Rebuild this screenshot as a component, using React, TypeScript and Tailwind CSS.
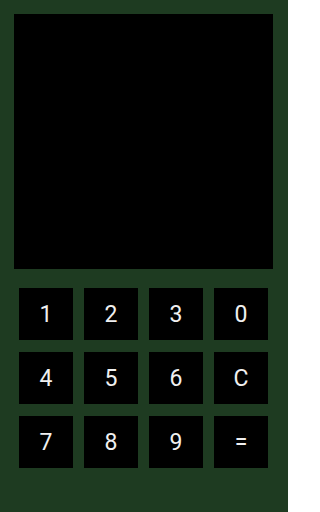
import React from 'react';

const KEYS = ['1', '2', '3', '0', '4', '5', '6', 'C', '7', '8', '9', '='];

export default function App() {
  return (
    <div className="h-[512px] w-[288px] bg-[#1e3b21] pt-[14px] pl-[14px] font-['Roboto',sans-serif]">
      <div className="h-[255px] w-[259px] bg-black" />
      <div className="mt-[19px] ml-[5px] grid w-[249px] grid-cols-[repeat(4,54px)] gap-x-[11px] gap-y-[12px]">
        {KEYS.map((k) => (
          <button
            key={k}
            className="flex h-[52px] w-[54px] items-center justify-center bg-black text-[23px] leading-none text-[#f0f0f0]"
          >
            {k}
          </button>
        ))}
      </div>
    </div>
  );
}
